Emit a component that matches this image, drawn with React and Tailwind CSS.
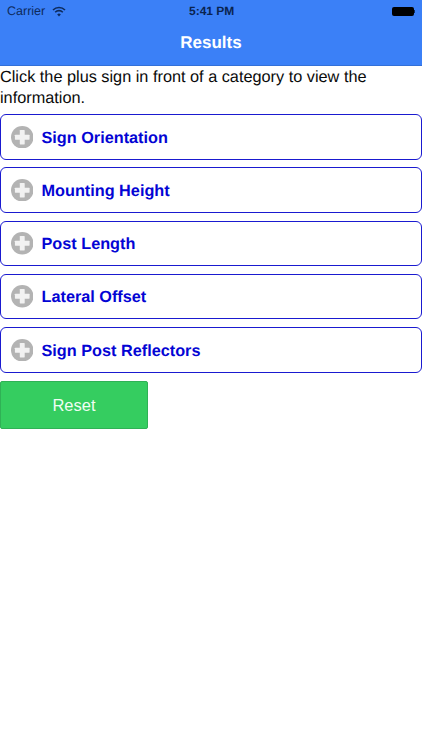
const categories = [
  "Sign Orientation",
  "Mounting Height",
  "Post Length",
  "Lateral Offset",
  "Sign Post Reflectors",
];

const PlusIcon = () => (
  <svg width="22.5" height="22.5" viewBox="0 0 23 23" className="shrink-0">
    <circle cx="11.5" cy="11.5" r="11.5" fill="#b3b3b3" />
    <rect x="9" y="4" width="5" height="15" rx="0.5" fill="#f2f2f2" />
    <rect x="4" y="9" width="15" height="5" rx="0.5" fill="#f2f2f2" />
  </svg>
);

const WifiIcon = () => (
  <svg width="14" height="11" viewBox="0 0 14 11" fill="none" stroke="#0d2a5c">
    <path d="M1 4 A8.5 8.5 0 0 1 13 4" strokeWidth="1.6" />
    <path d="M3.2 6.2 A5.4 5.4 0 0 1 10.8 6.2" strokeWidth="1.6" />
    <path d="M7 10.5 L5.2 8.4 A2.6 2.6 0 0 1 8.8 8.4 Z" fill="#0d2a5c" stroke="none" />
  </svg>
);

export default function App() {
  return (
    <div className="min-h-[750px] bg-white font-['Liberation_Sans',Arial,sans-serif] [text-rendering:geometricPrecision]">
      {/* Header */}
      <header className="h-[66px] bg-[#3b80f7] border-b border-[#3370d8]">
        <div className="relative flex h-[22px] items-center justify-between pl-[7px] pr-[7px] text-[12.5px] text-[#0d2a5c]">
          <div className="flex items-center gap-[7px]">
            <span>Carrier</span>
            <WifiIcon />
          </div>
          <span className="absolute left-[189px] text-[12px] font-bold text-[#0a2450]">5:41 PM</span>
          <div className="flex items-center">
            <div className="h-[9px] w-[22px] rounded-[2px] bg-black" />
            <div className="h-[3px] w-[1px] bg-[#0d2a5c]" />
          </div>
        </div>
        <h1 className="mt-[10px] text-center text-[17px] font-bold leading-[22px] text-white">Results</h1>
      </header>

      {/* Intro */}
      <p className="pt-[1px] text-[16.3px] leading-[21px] text-[#0a0a0a]">
        Click the plus sign in front of a category to view the information.
      </p>

      {/* Categories */}
      <div className="mt-[5px] flex flex-col gap-[7.75px]">
        {categories.map((name) => (
          <div
            key={name}
            className="flex h-[45.5px] items-center gap-[8.5px] rounded-[6px] border-[1.25px] border-[#1a1ad0] bg-white pl-[9.5px]"
          >
            <PlusIcon />
            <span className="pt-[2px] text-[16.25px] font-bold text-[#0404d4]">{name}</span>
          </div>
        ))}
      </div>

      {/* Reset */}
      <button className="mt-[8px] block h-[48px] w-[148px] rounded-[2px] border border-[#2fb155] bg-[#35cd60] pt-[1px] text-[16.5px] text-[#f0fdf3]">
        Reset
      </button>
    </div>
  );
}
